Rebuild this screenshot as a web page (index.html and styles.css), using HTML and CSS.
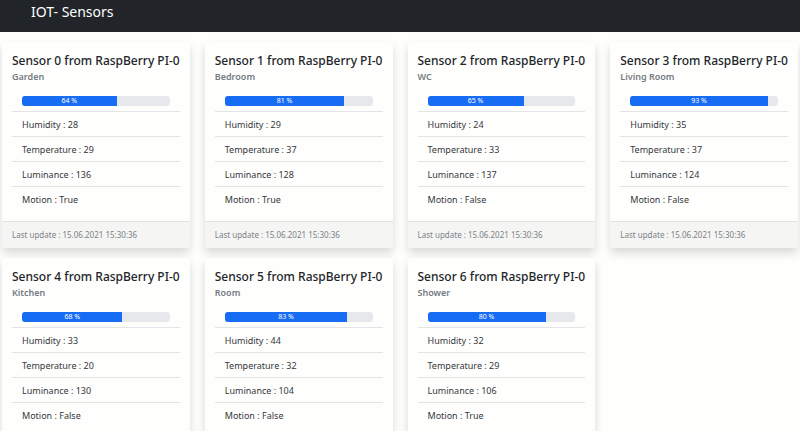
FILE: index.html
```html
<!DOCTYPE html>
<html lang="en">
<head>
<meta charset="utf-8">
<title>IOT- Sensors</title>
<link rel="stylesheet" href="styles.css">
</head>
<body>
<header class="navbar"><a class="brand" href="#">IOT- Sensors</a></header>
<main class="grid" id="sensors"></main>
<script src="app.js"></script>
</body>
</html>
```
FILE: app.js
```js
const sensors = [
  { room: "Garden", level: 64, humidity: 28, temperature: 29, luminance: 136, motion: "True" },
  { room: "Bedroom", level: 81, humidity: 29, temperature: 37, luminance: 128, motion: "True" },
  { room: "WC", level: 65, humidity: 24, temperature: 33, luminance: 137, motion: "False" },
  { room: "Living Room", level: 93, humidity: 35, temperature: 37, luminance: 124, motion: "False" },
  { room: "Kitchen", level: 68, humidity: 33, temperature: 20, luminance: 130, motion: "False" },
  { room: "Room", level: 83, humidity: 44, temperature: 32, luminance: 104, motion: "False" },
  { room: "Shower", level: 80, humidity: 32, temperature: 29, luminance: 106, motion: "True" }
];

document.getElementById("sensors").innerHTML = sensors.map((s, i) => `
  <article class="card">
    <div class="card-body">
      <h2 class="card-title">Sensor ${i} from RaspBerry PI-0</h2>
      <h3 class="card-subtitle">${s.room}</h3>
      <ul class="readings">
        <li class="reading reading-level">
          <div class="progress" role="progressbar" aria-valuenow="${s.level}" aria-valuemin="0" aria-valuemax="100">
            <div class="progress-bar" style="width: ${s.level}%">${s.level} %</div>
          </div>
        </li>
        <li class="reading">Humidity : ${s.humidity}</li>
        <li class="reading">Temperature : ${s.temperature}</li>
        <li class="reading">Luminance : ${s.luminance}</li>
        <li class="reading">Motion : ${s.motion}</li>
      </ul>
    </div>
    <footer class="card-footer">Last update : 15.06.2021 15:30:36</footer>
  </article>`).join("");
```
FILE: styles.css
```css
* {
  box-sizing: border-box;
}

body {
  margin: 0;
  height: 100vh;
  overflow: hidden;
  background: #fefefd;
  color: #212529;
  font-family: "Noto Sans", "Open Sans", sans-serif;
  font-size: 9px;
}

.navbar {
  display: flex;
  height: 32px;
  padding: 2px 31px 0;
  background: #212429;
}

.brand {
  color: #fff;
  font-size: 14px;
  line-height: 20px;
  text-decoration: none;
}

.grid {
  display: grid;
  grid-template-columns: repeat(4, minmax(0, 1fr));
  gap: 10px 15px;
  padding: 10px 2px;
}

.card {
  display: flex;
  flex-direction: column;
  border-radius: 3px;
  background: #fefefd;
  box-shadow: 0 5px 10px rgba(0, 0, 0, 0.15);
}

.card-body {
  flex: 1;
  padding: 10px;
}

.card-title {
  margin: 0;
  font-size: 12px;
  font-weight: 500;
  line-height: 17px;
  white-space: nowrap;
}

.card-subtitle {
  margin: 0 0 10px;
  color: #747b82;
  font-size: 9px;
  font-weight: 600;
  line-height: 15px;
}

.readings {
  margin: 0;
  padding: 0;
  list-style: none;
}

.reading {
  height: 25px;
  padding: 0 10px;
  border-top: 1px solid #e3e4e5;
  color: #34383c;
  line-height: 26px;
}

.reading-level {
  height: 17px;
  padding-top: 2px;
  border-top: 0;
}

.progress {
  height: 10px;
  overflow: hidden;
  border-radius: 3px;
  background: #e7e8eb;
}

.progress-bar {
  height: 100%;
  background: #176cf4;
  color: #fff;
  font-size: 7px;
  line-height: 10px;
  text-align: center;
}

.card-footer {
  padding: 5px 10px;
  border-top: 1px solid #e2e2e1;
  border-radius: 0 0 3px 3px;
  background: #f5f5f4;
  color: #7c8288;
  font-size: 8px;
  line-height: 16px;
}
```
